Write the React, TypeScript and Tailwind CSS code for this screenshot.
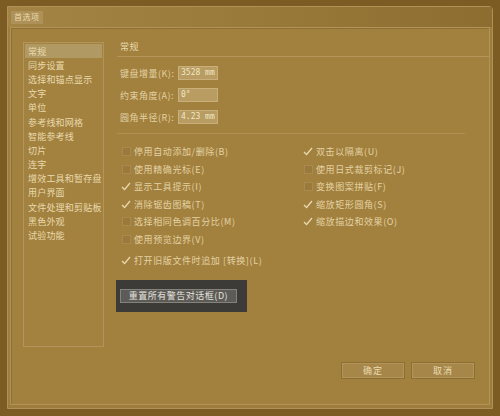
import React from "react";

const font = { fontFamily: '"Noto Sans CJK SC", "Noto Sans", sans-serif' };

const navItems = [
  "常规",
  "同步设置",
  "选择和锚点显示",
  "文字",
  "单位",
  "参考线和网格",
  "智能参考线",
  "切片",
  "连字",
  "增效工具和暂存盘",
  "用户界面",
  "文件处理和剪贴板",
  "黑色外观",
  "试验功能",
];

function Check({ on }: { on: boolean }) {
  if (on) {
    return (
      <svg width="10" height="9" viewBox="0 0 10 9" className="shrink-0">
        <path d="M1 5 L3.6 7.5 L9 1" fill="none" stroke="#e8d8ac" strokeWidth="1.3" />
      </svg>
    );
  }
  return <span className="block w-[9px] h-[9px] shrink-0 bg-[#9a7a3c] border border-[#a98a4c] mx-[0.5px]" />;
}

function Option({ on, label }: { on: boolean; label: string }) {
  return (
    <div className="flex items-center gap-[3px] h-[17.5px]">
      <Check on={on} />
      <span className="text-[9px] leading-none text-[#e3d2a3] tracking-[0.6px] whitespace-nowrap">{label}</span>
    </div>
  );
}

function Field({ label, value }: { label: string; value: string }) {
  return (
    <div className="flex items-center h-[22px]">
      <span className="w-[58px] text-[9px] leading-none text-[#e3d2a3] tracking-[0.5px] whitespace-nowrap">{label}</span>
      <span
        className="w-[40px] h-[14px] bg-[#b89c62] border border-[#c9b07a] text-[8px] leading-[12px] text-[#f1e6c4] pl-[2px] whitespace-nowrap overflow-hidden"
        style={{ fontFamily: '"DejaVu Sans Mono", monospace' }}
      >
        {value}
      </span>
    </div>
  );
}

function DlgButton({ label }: { label: string }) {
  return (
    <div className="w-[64px] h-[17px] flex items-center justify-center bg-[#a7864a] border border-[#8e6f33] shadow-[inset_0_0_0_1px_#b39459] text-[9px] leading-none text-[#eadcb2] tracking-[1px]">
      {label}
    </div>
  );
}

export default function App() {
  return (
    <div className="w-[500px] h-[416px] bg-[#7d5c23] overflow-hidden pt-[6px] pl-[7px]" style={font}>
      <div className="w-[486px] h-[403px] bg-[#9d7c3e] border border-[#b09256] rounded-tr-[4px] flex flex-col">
        {/* title bar */}
        <div className="h-[20px] flex items-center pl-[3px] bg-gradient-to-r from-[#a38444] via-[#9a7a3a] to-[#8e6d31]">
          <span className="px-[3px] h-[13px] flex items-center bg-[#ad9158] text-[8px] leading-none text-[#ead9ad] tracking-[0.5px]">首选项</span>
        </div>
        {/* body */}
        <div className="flex-1 mx-[2px] mb-[3px] bg-[#a2813f] border border-[#b39458] shadow-[inset_1px_1px_0_#8f6f33] flex">
          {/* category list */}
          <div className="ml-[12px] mt-[14px] w-[81px] h-[305px] border border-[#b1955c] bg-[#a3823f] pt-[1px] px-[1px] flex flex-col">
            {navItems.map((item, i) => (
              <div
                key={item}
                className={
                  "h-[14.2px] flex items-center pl-[3px] text-[9px] leading-none text-[#e8d9ae] tracking-[0.2px] whitespace-nowrap " +
                  (i === 0 ? "bg-[#b19964]" : "")
                }
              >
                {item}
              </div>
            ))}
          </div>

          {/* settings pane */}
          <div className="ml-[13px] flex-1 flex flex-col">
            <div className="mt-[13px] pl-[3px] text-[9px] leading-[12px] text-[#e8d9ae] tracking-[0.5px]">常规</div>
            <div className="mt-[3px] h-px bg-[#b39559]" />

            <div className="mt-[5px] pl-[3px] flex flex-col">
              <Field label="键盘增量(K):" value="3528 mm" />
              <Field label="约束角度(A):" value="0°" />
              <Field label="圆角半径(R):" value="4.23 mm" />
            </div>

            <div className="mt-[5px] h-px bg-[#af9054] mr-[24px]" />

            <div className="mt-[9px] pl-[4px] flex">
              <div className="w-[182px] flex flex-col">
                <Option on={false} label="停用自动添加/删除(B)" />
                <Option on={false} label="使用精确光标(E)" />
                <Option on={true} label="显示工具提示(I)" />
                <Option on={true} label="消除锯齿图稿(T)" />
                <Option on={false} label="选择相同色调百分比(M)" />
                <Option on={false} label="使用预览边界(V)" />
              </div>
              <div className="flex flex-col">
                <Option on={true} label="双击以隔离(U)" />
                <Option on={false} label="使用日式裁剪标记(J)" />
                <Option on={false} label="变换图案拼贴(F)" />
                <Option on={true} label="缩放矩形圆角(S)" />
                <Option on={true} label="缩放描边和效果(O)" />
              </div>
            </div>
            <div className="mt-[4px] pl-[4px]">
              <Option on={true} label="打开旧版文件时追加 [转换](L)" />
            </div>

            {/* reset warnings */}
            <div className="mt-[10px] -ml-[1px] w-[131px] h-[32px] bg-[#3d3b38] pt-[9px] pl-[4px]">
              <div className="w-[117px] h-[14px] bg-[#5d5b57] border border-[#85827c] flex items-center justify-center text-[9px] leading-none text-[#e4e2dc] tracking-[0.5px] whitespace-nowrap">
                重置所有警告对话框(D)
              </div>
            </div>

            <div className="mt-[50px] ml-[224px] flex gap-[6px]">
              <DlgButton label="确定" />
              <DlgButton label="取消" />
            </div>
          </div>
        </div>
      </div>
    </div>
  );
}
